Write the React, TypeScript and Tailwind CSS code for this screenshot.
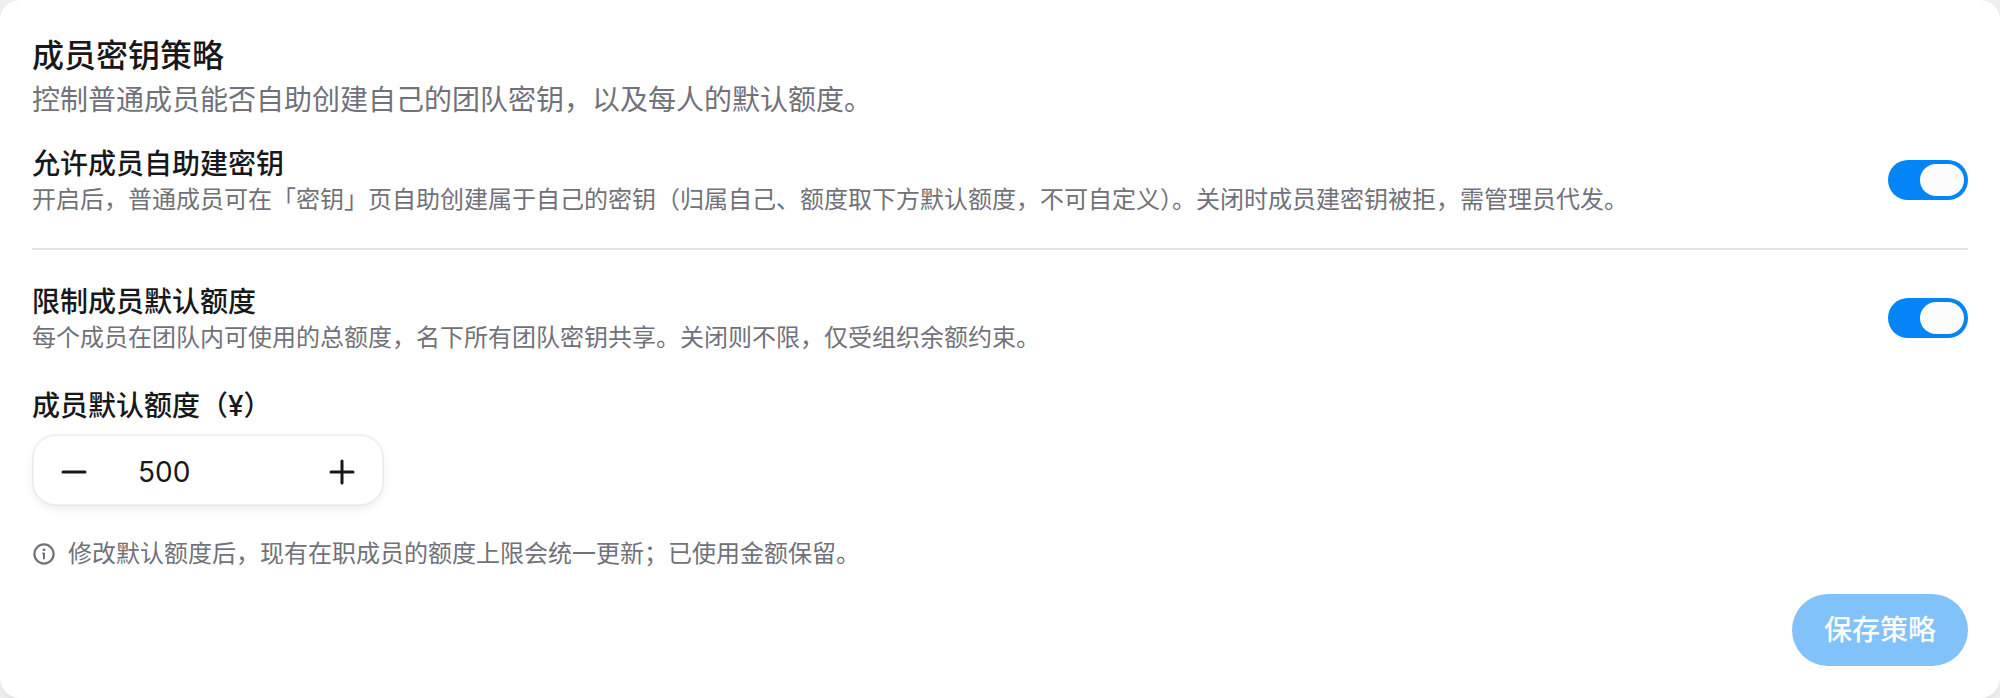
import { useState } from "react";
import type { InputHTMLAttributes } from "react";

interface SwitchRowProps {
  id: string;
  title: string;
  description: string;
  checked: boolean;
  onChange: (checked: boolean) => void;
}

function Switch(props: InputHTMLAttributes<HTMLInputElement>) {
  return (
    <input
      type="checkbox"
      role="switch"
      className="flex h-10 w-20 shrink-0 cursor-pointer appearance-none items-center rounded-full bg-zinc-200 p-1 transition-colors before:h-8 before:w-11 before:rounded-full before:bg-[#fcfcfc] before:content-[''] checked:justify-end checked:bg-[#0485f7]"
      {...props}
    />
  );
}

function SwitchRow({
  id,
  title,
  description,
  checked,
  onChange,
}: SwitchRowProps) {
  return (
    <div className="flex items-center justify-between gap-8">
      <div>
        <label htmlFor={id} className="block text-[28px] leading-10 font-medium">
          {title}
        </label>
        <p id={`${id}-desc`} className="text-2xl leading-8 text-[#71717a]">
          {description}
        </p>
      </div>
      <Switch
        id={id}
        aria-describedby={`${id}-desc`}
        checked={checked}
        onChange={(e) => onChange(e.target.checked)}
      />
    </div>
  );
}

function MinusIcon() {
  return (
    <svg viewBox="0 0 32 32" className="h-8 w-8" aria-hidden="true">
      <path
        d="M5 16h22"
        stroke="currentColor"
        strokeWidth="3"
        strokeLinecap="round"
      />
    </svg>
  );
}

function PlusIcon() {
  return (
    <svg viewBox="0 0 32 32" className="h-8 w-8" aria-hidden="true">
      <path
        d="M5 16h22M16 5v22"
        stroke="currentColor"
        strokeWidth="3"
        strokeLinecap="round"
      />
    </svg>
  );
}

function InfoIcon() {
  return (
    <svg
      viewBox="0 0 24 24"
      className="h-6 w-6 shrink-0"
      fill="none"
      aria-hidden="true"
    >
      <circle cx="12" cy="12" r="9.6" stroke="currentColor" strokeWidth="2.2" />
      <path
        d="M11 11.5h1v5"
        stroke="currentColor"
        strokeWidth="2"
        strokeLinecap="round"
        strokeLinejoin="round"
      />
      <circle cx="12" cy="7.8" r="1.4" fill="currentColor" />
    </svg>
  );
}

export default function App() {
  const [allowSelfCreate, setAllowSelfCreate] = useState(true);
  const [limitQuota, setLimitQuota] = useState(true);
  const [quota, setQuota] = useState(500);

  return (
    <div className="bg-[#f0f0f1] font-[Inter,'Noto_Sans_CJK_SC',sans-serif] text-[#18181b]">
      <section className="flex flex-col gap-6 rounded-[20px] bg-white p-8 shadow-[0_4px_8px_rgba(0,0,0,0.06)]">
        <header>
          <h2 className="text-[32px] leading-12 font-medium">成员密钥策略</h2>
          <p className="text-[28px] leading-10 text-[#71717a]">
            控制普通成员能否自助创建自己的团队密钥，以及每人的默认额度。
          </p>
        </header>

        <div className="flex flex-col gap-8">
          <SwitchRow
            id="allow-self-create"
            title="允许成员自助建密钥"
            description="开启后，普通成员可在「密钥」页自助创建属于自己的密钥（归属自己、额度取下方默认额度，不可自定义）。关闭时成员建密钥被拒，需管理员代发。"
            checked={allowSelfCreate}
            onChange={setAllowSelfCreate}
          />

          <hr className="border-t-2 border-[#e4e4e5]" />

          <SwitchRow
            id="limit-quota"
            title="限制成员默认额度"
            description="每个成员在团队内可使用的总额度，名下所有团队密钥共享。关闭则不限，仅受组织余额约束。"
            checked={limitQuota}
            onChange={setLimitQuota}
          />

          {/* Default quota */}
          <div className="flex flex-col items-start gap-2">
            <label htmlFor="quota" className="text-[28px] leading-10 font-medium">
              成员默认额度（¥）
            </label>
            <div className="flex h-18 w-88 max-w-full rounded-3xl border-2 border-black/5 bg-white bg-clip-padding pt-1 shadow-[0_4px_8px_rgba(0,0,0,0.06)]">
              <button
                type="button"
                aria-label="减少"
                className="flex w-20 shrink-0 items-center justify-center"
                onClick={() => setQuota(Math.max(0, quota - 1))}
              >
                <MinusIcon />
              </button>
              <input
                id="quota"
                type="text"
                inputMode="numeric"
                value={quota}
                onChange={(e) => setQuota(Number(e.target.value) || 0)}
                className="min-w-0 flex-1 bg-transparent px-6 text-[28px] leading-10 outline-none"
              />
              <button
                type="button"
                aria-label="增加"
                className="flex w-20 shrink-0 items-center justify-center"
                onClick={() => setQuota(quota + 1)}
              >
                <PlusIcon />
              </button>
            </div>
          </div>

          <div className="flex items-center gap-3 text-2xl leading-8 text-[#71717a]">
            <InfoIcon />
            <p>修改默认额度后，现有在职成员的额度上限会统一更新；已使用金额保留。</p>
          </div>
        </div>

        <button
          type="button"
          disabled
          className="h-18 self-end rounded-full bg-[#82c2fb] px-8 text-[28px] leading-10 font-medium text-[#fcfcfc]"
        >
          保存策略
        </button>
      </section>
    </div>
  );
}
